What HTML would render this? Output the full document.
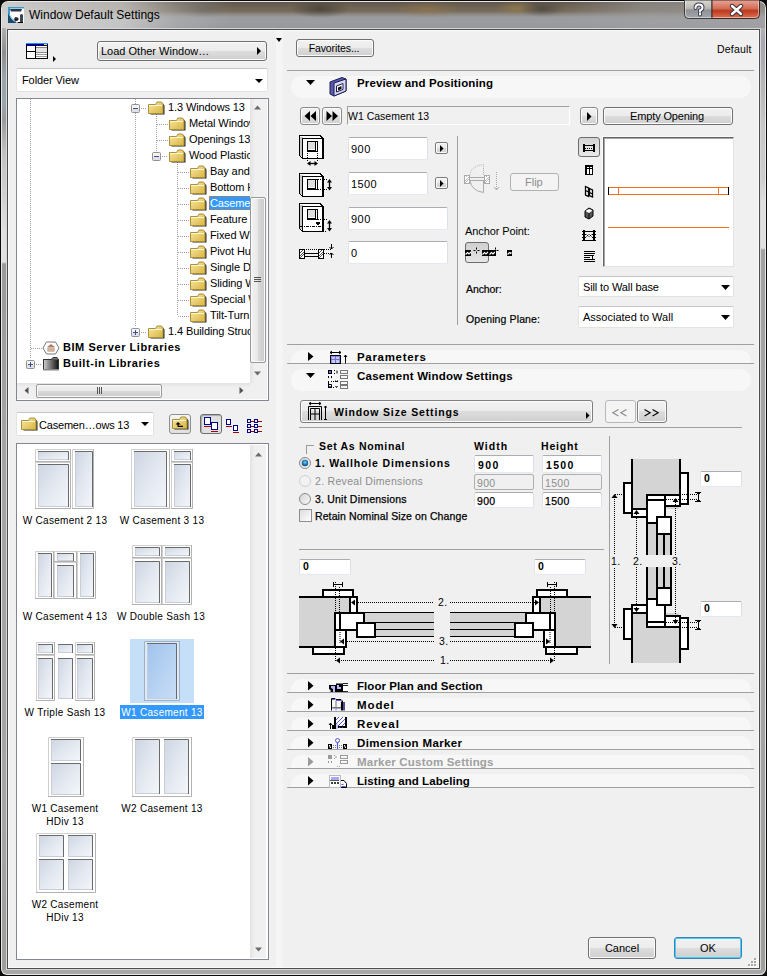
<!DOCTYPE html>
<html><head><meta charset="utf-8">
<style>
*{box-sizing:border-box}
html,body{margin:0;padding:0}
body{width:767px;height:976px;position:relative;overflow:hidden;background:#0c0c0c;font-family:"Liberation Sans",sans-serif;font-size:11px;color:#000}
.a{position:absolute}
.t{position:absolute;white-space:nowrap;line-height:13px}
.b{font-weight:bold}
/* win7 push button */
.btn{position:absolute;border:1px solid #707070;border-radius:3px;background:linear-gradient(#f2f2f2 0,#ebebeb 50%,#dddddd 50%,#cfcfcf 100%);box-shadow:inset 0 0 0 1px #fcfcfc;text-align:center;white-space:nowrap}
.edit{position:absolute;background:#fff;border:1px solid #abadb3;border-color:#abadb3 #dbdfe6 #e3e9ef #e2e3ea;border-radius:2px}
.combo{position:absolute;background:#fff;border:1px solid #dadada;border-color:#c5c5c5 #e3e3e3 #e3e3e3 #e3e3e3;border-radius:2px}
.tri-d{position:absolute;width:0;height:0;border-left:4px solid transparent;border-right:4px solid transparent;border-top:4px solid #000}
.tri-r{position:absolute;width:0;height:0;border-top:4px solid transparent;border-bottom:4px solid transparent;border-left:4px solid #000}
.hl{position:absolute;height:1px;background:#a0a0a0}
.vl{position:absolute;width:1px;background:#a0a0a0}
.dh{position:absolute;height:1px;background:repeating-linear-gradient(90deg,#a0a0a0 0 1px,transparent 1px 2px)}
.dv{position:absolute;width:1px;background:repeating-linear-gradient(180deg,#a0a0a0 0 1px,transparent 1px 2px)}
.sel{background:#3399ff;color:#fff;padding:1px 1px 0 1px;margin:-1px 0 0 -1px;height:14px;outline:1px dotted #d9741f;outline-offset:-1px}
.sb{position:absolute;background:linear-gradient(90deg,#e3e3e3,#f0f0f0 30%,#f0f0f0)}
.thumbv{position:absolute;border:1px solid #9a9a9a;border-radius:2px;background:linear-gradient(90deg,#f3f3f3,#e8e8e8 50%,#d9d9d9 50%,#cacaca);box-shadow:inset 0 0 0 1px #f8f8f8}
.thumbh{position:absolute;border:1px solid #9a9a9a;border-radius:2px;background:linear-gradient(#f3f3f3,#e8e8e8 50%,#d9d9d9 50%,#cacaca);box-shadow:inset 0 0 0 1px #f8f8f8}
.hdr{position:absolute;height:22px;border-radius:11px;background:#f7f7f7}
svg.a{overflow:visible}
</style></head><body>
<svg width="0" height="0" style="position:absolute">
<defs>
<g id="minus"><rect x="0.5" y="0.5" width="8" height="8" rx="1" fill="#f4f4f4" stroke="#919191"/><rect x="1" y="5" width="7" height="3" fill="#e0e0e0"/><rect x="2" y="4" width="5" height="1" fill="#3b4d9b"/></g>
<g id="plus"><rect x="0.5" y="0.5" width="8" height="8" rx="1" fill="#f4f4f4" stroke="#919191"/><rect x="1" y="5" width="7" height="3" fill="#e0e0e0"/><rect x="2" y="4" width="5" height="1" fill="#3b4d9b"/><rect x="4" y="2" width="1" height="5" fill="#3b4d9b"/></g>
<linearGradient id="fg" x1="0" y1="0" x2="1" y2="1"><stop offset="0" stop-color="#fbeaa6"/><stop offset="1" stop-color="#d8b33e"/></linearGradient>
<g id="folder"><path d="M1.5 3.5 h6 l1.5 -2 h5 l1.5 2 v9 h-14z" fill="#2b2b2b" transform="translate(1,1)"/><path d="M0.5 3.5 h7 l1.5 -2.5 h4.5 l1.5 2.5 v9 h-14.5z" fill="url(#fg)" stroke="#a88f3a"/><rect x="1" y="4" width="13" height="1" fill="#fff6cf"/></g>
<linearGradient id="lg" x1="0" y1="0" x2="1" y2="0"><stop offset="0" stop-color="#d0d0d0"/><stop offset="1" stop-color="#111"/></linearGradient>
<g id="lib"><rect x="0.5" y="2.5" width="15" height="10" fill="url(#lg)" stroke="#333"/><path d="M8 2.5 l2 -2 h4 l1.5 2" fill="#777" stroke="#333"/><rect x="0" y="12" width="16" height="1.5" fill="#888"/></g>
<g id="bim"><path d="M3.5 1 h9 l3.5 6 l-3.5 6 h-9 l-3.5 -6z" fill="#fff" stroke="#777"/><path d="M4 6 l4 -3 l4 3z M4.5 6.5 h7 v4 h-7z" fill="#b08060"/><path d="M6 7 v3 M8 7 v3 M10 7 v3" stroke="#fff" stroke-width="0.8"/></g>
</defs></svg>

<!-- window frame -->
<div class="a" style="left:0;top:0;width:767px;height:976px;background:#0a0a0a;border-radius:8px 8px 7px 7px"></div>
<div class="a" style="left:1px;top:1px;width:765px;height:974px;background:#e8e8e8;border-radius:7px 7px 6px 6px"></div>
<div class="a" style="left:2px;top:2px;width:763px;height:972px;background:#a8a8a8;border-radius:6px 6px 5px 5px"></div>
<!-- title blur -->
<div class="a" id="title" style="left:2px;top:2px;width:763px;height:26px;border-radius:6px 6px 0 0;background:linear-gradient(90deg,rgba(222,222,222,.85) 0,rgba(212,212,212,.72) 120px,rgba(190,190,190,.35) 175px,rgba(160,160,160,0) 230px),linear-gradient(90deg,rgba(165,165,165,0) 560px,rgba(160,160,162,.55) 640px,rgba(165,165,168,.6) 763px),radial-gradient(30px 9px at 318px 7px,rgba(50,42,36,.55),rgba(50,42,36,0)),radial-gradient(34px 9px at 425px 7px,rgba(160,125,70,.45),rgba(160,125,70,0)),radial-gradient(22px 8px at 540px 7px,rgba(45,45,45,.45),rgba(45,45,45,0)),radial-gradient(22px 8px at 515px 6px,rgba(170,140,70,.45),rgba(170,140,70,0)),radial-gradient(26px 9px at 200px 7px,rgba(70,70,70,.35),rgba(70,70,70,0)),linear-gradient(#5f564c 0,#6c6152 4px,#766a59 9px,#8a8681 12px,#9a9b9e 15px,#9c9da1 20px,#95979b 26px)"></div>
<div class="a" style="left:2px;top:28px;width:4px;height:942px;background:linear-gradient(#b0b0b0 0,#8e8e8e 25px,#9ba7ae 50px,#9aa6ad 77px,#9a9a9a 92px,#c2c2c2 125px,#d2d2d2 170px,#e0e0e0 205px,#e2e2e2 234px,#9a9a9a 236px,#a4a4a4 400px,#a6a6a6 800px,#a09e9a 942px)"></div>
<div class="a" style="left:761px;top:28px;width:4px;height:942px;background:linear-gradient(#b2b2b2 0,#a6a6ae 14px,#b4b4b4 50px,#c8c8c8 100px,#cccccc 150px,#e0e0e0 175px,#e0e0e0 220px,#a2a2a2 222px,#a6a6a6 600px,#a09e9a 942px)"></div>
<div class="a" style="left:6px;top:28px;width:755px;height:942px;background:#d6d7da"></div>
<div class="a" style="left:7px;top:29px;width:753px;height:940px;background:#4c4c4c"></div>
<div class="a" style="left:8px;top:30px;width:751px;height:938px;background:#fafafa"></div>
<div class="a" style="left:9px;top:31px;width:749px;height:936px;background:#f0f0f0"></div>
<div class="t" style="left:29px;top:8px;font-size:12px;line-height:15px;color:#000">Window Default Settings</div>
<!-- title icon -->
<svg class="a" style="left:8px;top:7px" width="16" height="16">
<rect x="0" y="0" width="16" height="16" fill="#fff"/>
<path d="M0 0 H16 V1.5 H2 V16 H0z" fill="#3d9ad0"/>
<path d="M0 6 Q2 12 9 16 H0z" fill="#1c4a6a"/><path d="M1 7 Q3 12 8 15" stroke="#5ab8e8" fill="none"/>
<path d="M2 2 H14 L13 4.5 H3z" fill="#2a3448"/>
<path d="M7.5 10 Q10 10 11 12 Q9 15 7 14 Q5 12 7.5 10z" fill="#2c2630"/>
<path d="M12 16 V8 Q13.5 6 15 8 V16z" fill="#3a4656"/><path d="M15 2 V16 H9 L10 15 H15z" fill="#000"/>
</svg>
<!-- help & close -->
<svg class="a" style="left:684px;top:0" width="77" height="20">
<defs><linearGradient id="hb" x1="0" y1="0" x2="0" y2="1"><stop offset="0" stop-color="#dad8d2"/><stop offset="0.45" stop-color="#b9b8b4"/><stop offset="0.55" stop-color="#8f9195"/><stop offset="1" stop-color="#a4a7ad"/></linearGradient>
<linearGradient id="cb" x1="0" y1="0" x2="0" y2="1"><stop offset="0" stop-color="#e9a596"/><stop offset="0.45" stop-color="#d2705a"/><stop offset="0.58" stop-color="#c0381c"/><stop offset="1" stop-color="#d9765a"/></linearGradient></defs>
<path d="M0.5 0 V14.5 Q0.5 18.5 4.5 18.5 H28 V0z" fill="url(#hb)" stroke="#3c3c3c"/>
<path d="M28 0 V18.5 H71.5 Q75.5 18.5 75.5 14.5 V0z" fill="url(#cb)" stroke="#3c2a26"/>
<path d="M1.5 1 V14 Q1.5 17.5 5 17.5 H27.5 M28.5 17.5 H71 Q74.5 17.5 74.5 14 V1" fill="none" stroke="rgba(255,255,255,.45)"/>
<path d="M11.5 8 Q11.5 4.5 15 4.5 Q18.5 4.5 18.5 7.5 Q18.5 9.5 16 10.5 V11.5 M16 13.5 V14.5" fill="none" stroke="#3a3f52" stroke-width="4" stroke-linecap="round"/>
<path d="M11.5 8 Q11.5 4.5 15 4.5 Q18.5 4.5 18.5 7.5 Q18.5 9.5 16 10.5 V11.5 M16 13.5 V14.5" fill="none" stroke="#fff" stroke-width="2" stroke-linecap="round"/>
<path d="M48 6 L57 14 M57 6 L48 14" stroke="#3a2f38" stroke-width="4.4" stroke-linecap="round"/>
<path d="M48 6 L57 14 M57 6 L48 14" stroke="#fff" stroke-width="2.4" stroke-linecap="round"/>
</svg>
<!-- splitter -->
<div class="a" style="left:276px;top:31px;width:7px;height:936px;background:#f5f5f5"></div>
<div class="tri-d" style="left:276px;top:38px;border-width:4px 3px 0 3px"></div>


<!-- ============ LEFT PANEL ============ -->
<svg class="a" style="left:26px;top:43px" width="32" height="20" shape-rendering="crispEdges">
<rect x="0" y="0" width="22" height="16" fill="#000"/><rect x="1" y="3" width="20" height="12" fill="#fff"/>
<rect x="0" y="0" width="22" height="1" fill="#2a8cff"/><rect x="0" y="1" width="22" height="2" fill="#000080"/><rect x="18" y="1" width="3" height="1" fill="#ffe800"/>
<rect x="9" y="3" width="1" height="12" fill="#000"/><rect x="1" y="8" width="8" height="1" fill="#000"/>
<rect x="10" y="4" width="11" height="1" fill="#8a8a8a"/><rect x="10" y="5" width="11" height="4" fill="#e4e4e4"/><rect x="10" y="9" width="11" height="1" fill="#8a8a8a"/><rect x="10" y="11" width="11" height="1" fill="#9a9a9a"/><rect x="10" y="13" width="11" height="1" fill="#9a9a9a"/>
<path d="M27 13 l3 3 l-3 3z" fill="#000" shape-rendering="auto"/>
</svg>
<div class="btn" style="left:97px;top:41px;width:170px;height:20px;text-align:left;padding-left:3px;line-height:18px;font-size:11px">Load Other Window…</div>
<div class="tri-r" style="left:257px;top:47px"></div>
<div class="combo" style="left:16px;top:68px;width:252px;height:24px"></div>
<div class="t" style="left:22px;top:74px;font-size:11px;letter-spacing:-0.1px">Folder View</div>
<div class="tri-d" style="left:255px;top:79px"></div>
<!-- tree box -->
<div class="a" style="left:16px;top:98px;width:253px;height:303px;border:1px solid #828790;background:#fff;overflow:hidden" id="treebox"></div>

<div class="a" style="left:17px;top:99px;width:233px;height:284px;overflow:hidden">
<div class="dv" style="left:13px;top:0px;height:260px"></div>
<div class="dv" style="left:118px;top:0px;height:228px"></div>
<div class="dv" style="left:139px;top:15px;height:37px"></div>
<div class="dv" style="left:160px;top:63px;height:154px"></div>
<svg class="a" style="left:114px;top:5px" width="9" height="9"><use href="#minus"/></svg>
<div class="dh" style="left:124px;top:9px;width:6px"></div>
<svg class="a" style="left:131px;top:2px" width="17" height="14"><use href="#folder"/></svg>
<div class="t" style="left:151px;top:2px;font-size:11px;letter-spacing:-0.1px">1.3 Windows 13</div>
<div class="dh" style="left:140px;top:25px;width:11px"></div>
<svg class="a" style="left:152px;top:18px" width="17" height="14"><use href="#folder"/></svg>
<div class="t" style="left:172px;top:18px;font-size:11px;letter-spacing:-0.1px">Metal Windows 13</div>
<div class="dh" style="left:140px;top:41px;width:11px"></div>
<svg class="a" style="left:152px;top:34px" width="17" height="14"><use href="#folder"/></svg>
<div class="t" style="left:172px;top:34px;font-size:11px;letter-spacing:-0.1px">Openings 13</div>
<svg class="a" style="left:135px;top:53px" width="9" height="9"><use href="#minus"/></svg>
<div class="dh" style="left:145px;top:57px;width:6px"></div>
<svg class="a" style="left:152px;top:50px" width="17" height="14"><use href="#folder"/></svg>
<div class="t" style="left:172px;top:50px;font-size:11px;letter-spacing:-0.1px">Wood Plastic Windows 13</div>
<div class="dh" style="left:161px;top:73px;width:11px"></div>
<svg class="a" style="left:173px;top:66px" width="17" height="14"><use href="#folder"/></svg>
<div class="t" style="left:193px;top:66px;font-size:11px;letter-spacing:-0.1px">Bay and Bow Windows 13</div>
<div class="dh" style="left:161px;top:89px;width:11px"></div>
<svg class="a" style="left:173px;top:82px" width="17" height="14"><use href="#folder"/></svg>
<div class="t" style="left:193px;top:82px;font-size:11px;letter-spacing:-0.1px">Bottom Hung Windows 13</div>
<div class="dh" style="left:161px;top:105px;width:11px"></div>
<svg class="a" style="left:173px;top:98px" width="17" height="14"><use href="#folder"/></svg>
<div class="t sel" style="left:193px;top:98px;font-size:11px;letter-spacing:-0.1px">Casement Windows 13</div>
<div class="dh" style="left:161px;top:121px;width:11px"></div>
<svg class="a" style="left:173px;top:114px" width="17" height="14"><use href="#folder"/></svg>
<div class="t" style="left:193px;top:114px;font-size:11px;letter-spacing:-0.1px">Feature Windows 13</div>
<div class="dh" style="left:161px;top:137px;width:11px"></div>
<svg class="a" style="left:173px;top:130px" width="17" height="14"><use href="#folder"/></svg>
<div class="t" style="left:193px;top:130px;font-size:11px;letter-spacing:-0.1px">Fixed Windows 13</div>
<div class="dh" style="left:161px;top:153px;width:11px"></div>
<svg class="a" style="left:173px;top:146px" width="17" height="14"><use href="#folder"/></svg>
<div class="t" style="left:193px;top:146px;font-size:11px;letter-spacing:-0.1px">Pivot Hung Windows 13</div>
<div class="dh" style="left:161px;top:169px;width:11px"></div>
<svg class="a" style="left:173px;top:162px" width="17" height="14"><use href="#folder"/></svg>
<div class="t" style="left:193px;top:162px;font-size:11px;letter-spacing:-0.1px">Single Double Hung 13</div>
<div class="dh" style="left:161px;top:185px;width:11px"></div>
<svg class="a" style="left:173px;top:178px" width="17" height="14"><use href="#folder"/></svg>
<div class="t" style="left:193px;top:178px;font-size:11px;letter-spacing:-0.1px">Sliding Windows 13</div>
<div class="dh" style="left:161px;top:201px;width:11px"></div>
<svg class="a" style="left:173px;top:194px" width="17" height="14"><use href="#folder"/></svg>
<div class="t" style="left:193px;top:194px;font-size:11px;letter-spacing:-0.1px">Special Windows 13</div>
<div class="dh" style="left:161px;top:217px;width:11px"></div>
<svg class="a" style="left:173px;top:210px" width="17" height="14"><use href="#folder"/></svg>
<div class="t" style="left:193px;top:210px;font-size:11px;letter-spacing:-0.1px">Tilt-Turn Windows 13</div>
<svg class="a" style="left:114px;top:229px" width="9" height="9"><use href="#plus"/></svg>
<div class="dh" style="left:124px;top:233px;width:6px"></div>
<svg class="a" style="left:131px;top:226px" width="17" height="14"><use href="#folder"/></svg>
<div class="t" style="left:151px;top:226px;font-size:11px;letter-spacing:-0.1px">1.4 Building Structures 13</div>
<div class="dh" style="left:14px;top:249px;width:11px"></div>
<svg class="a" style="left:26px;top:242px" width="17" height="14"><use href="#bim"/></svg>
<div class="t b" style="left:46px;top:242px;font-size:11px;letter-spacing:0.55px">BIM Server Libraries</div>
<svg class="a" style="left:9px;top:261px" width="9" height="9"><use href="#plus"/></svg>
<div class="dh" style="left:19px;top:265px;width:6px"></div>
<svg class="a" style="left:26px;top:258px" width="17" height="14"><use href="#lib"/></svg>
<div class="t b" style="left:46px;top:258px;font-size:11px;letter-spacing:0.55px">Built-in Libraries</div>
</div>
<div class="sb" style="left:250px;top:99px;width:17px;height:284px"></div>
<div class="thumbv" style="left:250px;top:197px;width:16px;height:166px"></div>
<div class="a" style="left:254px;top:277px;width:7px;height:1px;background:#555;box-shadow:0 2px 0 #555,0 4px 0 #555"></div>
<svg class="a" style="left:254px;top:105px" width="8" height="5"><path d="M0 4.5 L3.5 0.5 L7 4.5z" fill="#6b6b6b"/></svg>
<svg class="a" style="left:254px;top:371px" width="8" height="5"><path d="M0 0.5 L3.5 4.5 L7 0.5z" fill="#6b6b6b"/></svg>
<div class="sb" style="left:17px;top:383px;width:250px;height:16px;background:linear-gradient(#e3e3e3,#f0f0f0 30%)"></div>
<div class="thumbh" style="left:36px;top:384px;width:126px;height:14px"></div>
<div class="a" style="left:97px;top:387px;width:1px;height:7px;background:#555;box-shadow:2px 0 0 #555,4px 0 0 #555"></div>
<svg class="a" style="left:24px;top:387px" width="5" height="8"><path d="M4.5 0 L0.5 3.5 L4.5 7z" fill="#555"/></svg>
<svg class="a" style="left:239px;top:387px" width="5" height="8"><path d="M0.5 0 L4.5 3.5 L0.5 7z" fill="#555"/></svg>
<div class="a" style="left:250px;top:383px;width:17px;height:16px;background:#f0f0f0"></div>
<div class="combo" style="left:16px;top:412px;width:138px;height:24px"></div>
<svg class="a" style="left:21px;top:417px" width="17" height="14"><use href="#folder"/></svg>
<div class="t" style="left:39px;top:419px;letter-spacing:-0.2px">Casemen…ows 13</div>
<svg class="a" style="left:141px;top:422px" width="8" height="5"><path d="M0 0 L4 4 L8 0z" fill="#000"/></svg>
<div class="a" style="left:169px;top:414px;width:22px;height:20px;border:1px solid #8e8f8f;border-radius:3px;background:linear-gradient(#f6f6f6,#e0e0e0)"></div>
<svg class="a" style="left:172px;top:416px" width="17" height="14"><use href="#folder"/><path d="M6 6 l-2.5 2.5 h2 v2.5 h5.5 v-1.2 h-4.3 v-1.3 h2z" fill="#000"/></svg>
<div class="a" style="left:200px;top:414px;width:22px;height:20px;border:1px solid #6e6e6e;border-radius:3px;background:#e1e1e1;box-shadow:inset 1px 1px 1px #aaa"></div>
<svg class="a" style="left:203px;top:417px" width="16" height="16">
<rect x="1.5" y="0.5" width="6" height="7" fill="#fff" stroke="#00008a"/><rect x="1" y="9" width="7" height="1" fill="#a00000"/>
<rect x="8.5" y="5.5" width="6" height="7" fill="#fff" stroke="#00008a"/><rect x="8" y="14" width="7" height="1" fill="#a00000"/></svg>
<svg class="a" style="left:225px;top:419px" width="16" height="14">
<rect x="1.5" y="0.5" width="4" height="5" fill="#fff" stroke="#00008a"/><rect x="1" y="7" width="6" height="1" fill="#a00000"/>
<rect x="8.5" y="6.5" width="4" height="5" fill="#fff" stroke="#00008a"/><rect x="8" y="13" width="6" height="1" fill="#a00000"/></svg>
<svg class="a" style="left:247px;top:419px" width="16" height="14">
<g fill="none" stroke="#00008a"><rect x="0.5" y="0.5" width="3" height="3"/><rect x="0.5" y="5.5" width="3" height="3"/><rect x="0.5" y="10.5" width="3" height="3"/><rect x="7.5" y="0.5" width="3" height="3"/><rect x="7.5" y="5.5" width="3" height="3"/><rect x="7.5" y="10.5" width="3" height="3"/></g>
<g fill="#a00000"><rect x="4" y="2" width="3" height="1"/><rect x="4" y="7" width="3" height="1"/><rect x="4" y="12" width="3" height="1"/><rect x="11" y="2" width="4" height="1"/><rect x="11" y="7" width="4" height="1"/><rect x="11" y="12" width="4" height="1"/></g></svg>
<!-- grid box -->
<div class="a" style="left:16px;top:443px;width:253px;height:517px;border:1px solid #828790;background:#fff"></div>
<div class="sb" style="left:250px;top:445px;width:16px;height:513px"></div>
<svg class="a" style="left:255px;top:452px" width="8" height="5"><path d="M0 4.5 L3.5 0.5 L7 4.5z" fill="#6b6b6b"/></svg>
<svg class="a" style="left:255px;top:947px" width="8" height="5"><path d="M0 0.5 L3.5 4.5 L7 0.5z" fill="#6b6b6b"/></svg>
<svg width="0" height="0" style="position:absolute"><defs>
<linearGradient id="gl" x1="0" y1="0" x2="1" y2="1"><stop offset="0" stop-color="#cdd5e2"/><stop offset="0.5" stop-color="#e3e8f0"/><stop offset="1" stop-color="#f4f6fa"/></linearGradient>
<linearGradient id="gls" x1="0" y1="0" x2="1" y2="1"><stop offset="0" stop-color="#9fc2ec"/><stop offset="0.5" stop-color="#b5d1f2"/><stop offset="1" stop-color="#c9ddf5"/></linearGradient>
</defs></svg>

<svg class="a" style="left:35px;top:449px" width="60" height="61"><rect x="0" y="0" width="36" height="13" fill="#fff"/><path d="M0.5 13 V0.5 H36" stroke="#cfcfcf" fill="none"/><path d="M0 12.5 H35.5 V0" stroke="#b2b2b2" fill="none"/><rect x="3" y="2" width="31" height="9" fill="url(#gl)"/><path d="M3 2.5 H33.5 V11" stroke="#6a6a6a" fill="none"/><path d="M3.5 3 V10.5 H33" stroke="#c9ced6" fill="none"/><rect x="0" y="13" width="36" height="47" fill="#fff"/><path d="M0.5 60 V13.5 H36" stroke="#cfcfcf" fill="none"/><path d="M0 59.5 H35.5 V13" stroke="#b2b2b2" fill="none"/><rect x="3" y="15" width="31" height="43" fill="url(#gl)"/><path d="M3 15.5 H33.5 V58" stroke="#6a6a6a" fill="none"/><path d="M3.5 16 V57.5 H33" stroke="#c9ced6" fill="none"/><rect x="37" y="0" width="22" height="60" fill="#fff"/><path d="M37.5 60 V0.5 H59" stroke="#cfcfcf" fill="none"/><path d="M37 59.5 H58.5 V0" stroke="#b2b2b2" fill="none"/><rect x="40" y="2" width="18" height="56" fill="url(#gl)"/><path d="M40 2.5 H57.5 V58" stroke="#6a6a6a" fill="none"/><path d="M40.5 3 V57.5 H57" stroke="#c9ced6" fill="none"/></svg>
<svg class="a" style="left:131px;top:449px" width="63" height="61"><rect x="0" y="0" width="39" height="60" fill="#fff"/><path d="M0.5 60 V0.5 H39" stroke="#cfcfcf" fill="none"/><path d="M0 59.5 H38.5 V0" stroke="#b2b2b2" fill="none"/><rect x="3" y="2" width="33" height="56" fill="url(#gl)"/><path d="M3 2.5 H35.5 V58" stroke="#6a6a6a" fill="none"/><path d="M3.5 3 V57.5 H35" stroke="#c9ced6" fill="none"/><rect x="40" y="0" width="22" height="13" fill="#fff"/><path d="M40.5 13 V0.5 H62" stroke="#cfcfcf" fill="none"/><path d="M40 12.5 H61.5 V0" stroke="#b2b2b2" fill="none"/><rect x="43" y="2" width="17" height="9" fill="url(#gl)"/><path d="M43 2.5 H59.5 V11" stroke="#6a6a6a" fill="none"/><path d="M43.5 3 V10.5 H59" stroke="#c9ced6" fill="none"/><rect x="40" y="13" width="22" height="47" fill="#fff"/><path d="M40.5 60 V13.5 H62" stroke="#cfcfcf" fill="none"/><path d="M40 59.5 H61.5 V13" stroke="#b2b2b2" fill="none"/><rect x="43" y="15" width="17" height="43" fill="url(#gl)"/><path d="M43 15.5 H59.5 V58" stroke="#6a6a6a" fill="none"/><path d="M43.5 16 V57.5 H59" stroke="#c9ced6" fill="none"/></svg>
<svg class="a" style="left:35px;top:551px" width="62" height="49"><rect x="0" y="0" width="19" height="48" fill="#fff"/><path d="M0.5 48 V0.5 H19" stroke="#cfcfcf" fill="none"/><path d="M0 47.5 H18.5 V0" stroke="#b2b2b2" fill="none"/><rect x="3" y="2" width="14" height="44" fill="url(#gl)"/><path d="M3 2.5 H16.5 V46" stroke="#6a6a6a" fill="none"/><path d="M3.5 3 V45.5 H16" stroke="#c9ced6" fill="none"/><rect x="19" y="0" width="23" height="11" fill="#fff"/><path d="M19.5 11 V0.5 H42" stroke="#cfcfcf" fill="none"/><path d="M19 10.5 H41.5 V0" stroke="#b2b2b2" fill="none"/><rect x="22" y="2" width="17" height="8" fill="url(#gl)"/><path d="M22 2.5 H38.5 V10" stroke="#6a6a6a" fill="none"/><path d="M22.5 3 V9.5 H38" stroke="#c9ced6" fill="none"/><rect x="19" y="11" width="23" height="37" fill="#fff"/><path d="M19.5 48 V11.5 H42" stroke="#cfcfcf" fill="none"/><path d="M19 47.5 H41.5 V11" stroke="#b2b2b2" fill="none"/><rect x="22" y="14" width="17" height="32" fill="url(#gl)"/><path d="M22 14.5 H38.5 V46" stroke="#6a6a6a" fill="none"/><path d="M22.5 15 V45.5 H38" stroke="#c9ced6" fill="none"/><rect x="42" y="0" width="19" height="48" fill="#fff"/><path d="M42.5 48 V0.5 H61" stroke="#cfcfcf" fill="none"/><path d="M42 47.5 H60.5 V0" stroke="#b2b2b2" fill="none"/><rect x="45" y="2" width="14" height="44" fill="url(#gl)"/><path d="M45 2.5 H58.5 V46" stroke="#6a6a6a" fill="none"/><path d="M45.5 3 V45.5 H58" stroke="#c9ced6" fill="none"/></svg>
<svg class="a" style="left:132px;top:545px" width="61" height="61"><rect x="0" y="0" width="30" height="13" fill="#fff"/><path d="M0.5 13 V0.5 H30" stroke="#cfcfcf" fill="none"/><path d="M0 12.5 H29.5 V0" stroke="#b2b2b2" fill="none"/><rect x="3" y="2" width="25" height="9" fill="url(#gl)"/><path d="M3 2.5 H27.5 V11" stroke="#6a6a6a" fill="none"/><path d="M3.5 3 V10.5 H27" stroke="#c9ced6" fill="none"/><rect x="30" y="0" width="30" height="13" fill="#fff"/><path d="M30.5 13 V0.5 H60" stroke="#cfcfcf" fill="none"/><path d="M30 12.5 H59.5 V0" stroke="#b2b2b2" fill="none"/><rect x="33" y="2" width="25" height="9" fill="url(#gl)"/><path d="M33 2.5 H57.5 V11" stroke="#6a6a6a" fill="none"/><path d="M33.5 3 V10.5 H57" stroke="#c9ced6" fill="none"/><rect x="0" y="13" width="30" height="47" fill="#fff"/><path d="M0.5 60 V13.5 H30" stroke="#cfcfcf" fill="none"/><path d="M0 59.5 H29.5 V13" stroke="#b2b2b2" fill="none"/><rect x="3" y="16" width="25" height="42" fill="url(#gl)"/><path d="M3 16.5 H27.5 V58" stroke="#6a6a6a" fill="none"/><path d="M3.5 17 V57.5 H27" stroke="#c9ced6" fill="none"/><rect x="30" y="13" width="30" height="47" fill="#fff"/><path d="M30.5 60 V13.5 H60" stroke="#cfcfcf" fill="none"/><path d="M30 59.5 H59.5 V13" stroke="#b2b2b2" fill="none"/><rect x="33" y="16" width="25" height="42" fill="url(#gl)"/><path d="M33 16.5 H57.5 V58" stroke="#6a6a6a" fill="none"/><path d="M33.5 17 V57.5 H57" stroke="#c9ced6" fill="none"/></svg>
<svg class="a" style="left:36px;top:642px" width="60" height="60"><rect x="0" y="0" width="19" height="13" fill="#fff"/><path d="M0.5 13 V0.5 H19" stroke="#cfcfcf" fill="none"/><path d="M0 12.5 H18.5 V0" stroke="#b2b2b2" fill="none"/><rect x="2" y="2" width="15" height="9" fill="url(#gl)"/><path d="M2 2.5 H16.5 V11" stroke="#6a6a6a" fill="none"/><path d="M2.5 3 V10.5 H16" stroke="#c9ced6" fill="none"/><rect x="19" y="0" width="20" height="59" fill="#fff"/><rect x="22" y="2" width="15" height="9" fill="url(#gl)"/><path d="M22 2.5 H36.5 V11" stroke="#6a6a6a" fill="none"/><path d="M22.5 3 V10.5 H36" stroke="#c9ced6" fill="none"/><rect x="39" y="0" width="20" height="13" fill="#fff"/><path d="M39.5 13 V0.5 H59" stroke="#cfcfcf" fill="none"/><path d="M39 12.5 H58.5 V0" stroke="#b2b2b2" fill="none"/><rect x="41" y="2" width="16" height="9" fill="url(#gl)"/><path d="M41 2.5 H56.5 V11" stroke="#6a6a6a" fill="none"/><path d="M41.5 3 V10.5 H56" stroke="#c9ced6" fill="none"/><rect x="0" y="13" width="19" height="46" fill="#fff"/><path d="M0.5 59 V13.5 H19" stroke="#cfcfcf" fill="none"/><path d="M0 58.5 H18.5 V13" stroke="#b2b2b2" fill="none"/><rect x="2" y="16" width="15" height="41" fill="url(#gl)"/><path d="M2 16.5 H16.5 V57" stroke="#6a6a6a" fill="none"/><path d="M2.5 17 V56.5 H16" stroke="#c9ced6" fill="none"/><rect x="22" y="16" width="15" height="41" fill="url(#gl)"/><path d="M22 16.5 H36.5 V57" stroke="#6a6a6a" fill="none"/><path d="M22.5 17 V56.5 H36" stroke="#c9ced6" fill="none"/><rect x="39" y="13" width="20" height="46" fill="#fff"/><path d="M39.5 59 V13.5 H59" stroke="#cfcfcf" fill="none"/><path d="M39 58.5 H58.5 V13" stroke="#b2b2b2" fill="none"/><rect x="41" y="16" width="16" height="41" fill="url(#gl)"/><path d="M41 16.5 H56.5 V57" stroke="#6a6a6a" fill="none"/><path d="M41.5 17 V56.5 H56" stroke="#c9ced6" fill="none"/></svg>
<div class="a" style="left:130px;top:639px;width:64px;height:64px;background:#c6dff8"></div>
<svg class="a" style="left:144px;top:641px" width="37" height="61"><rect x="0" y="0" width="36" height="60" fill="#dbe9f9"/><path d="M0.5 60 V0.5 H36 M0 59.5 H35.5 V0" stroke="#9fb0c4" fill="none"/><rect x="3" y="2" width="30" height="56" fill="url(#gls)"/><path d="M3 2.5 H32.5 V58" stroke="#6a6a6a" fill="none"/><path d="M3.5 3 V57.5 H32" stroke="#c9ced6" fill="none"/></svg>
<svg class="a" style="left:48px;top:737px" width="37" height="61"><rect x="0" y="0" width="36" height="60" fill="#fff"/><path d="M0.5 60 V0.5 H36" stroke="#cfcfcf" fill="none"/><path d="M0 59.5 H35.5 V0" stroke="#b2b2b2" fill="none"/><rect x="3" y="2" width="30" height="22" fill="url(#gl)"/><path d="M3 2.5 H32.5 V24" stroke="#6a6a6a" fill="none"/><path d="M3.5 3 V23.5 H32" stroke="#c9ced6" fill="none"/><rect x="3" y="26" width="30" height="32" fill="url(#gl)"/><path d="M3 26.5 H32.5 V58" stroke="#6a6a6a" fill="none"/><path d="M3.5 27 V57.5 H32" stroke="#c9ced6" fill="none"/></svg>
<svg class="a" style="left:132px;top:737px" width="61" height="61"><rect x="0" y="0" width="60" height="60" fill="#fff"/><path d="M0.5 60 V0.5 H60" stroke="#cfcfcf" fill="none"/><path d="M0 59.5 H59.5 V0" stroke="#b2b2b2" fill="none"/><rect x="3" y="2" width="25" height="55" fill="url(#gl)"/><path d="M3 2.5 H27.5 V57" stroke="#6a6a6a" fill="none"/><path d="M3.5 3 V56.5 H27" stroke="#c9ced6" fill="none"/><rect x="32" y="2" width="25" height="55" fill="url(#gl)"/><path d="M32 2.5 H56.5 V57" stroke="#6a6a6a" fill="none"/><path d="M32.5 3 V56.5 H56" stroke="#c9ced6" fill="none"/></svg>
<svg class="a" style="left:36px;top:833px" width="61" height="61"><rect x="0" y="0" width="60" height="60" fill="#fff"/><path d="M0.5 60 V0.5 H60" stroke="#cfcfcf" fill="none"/><path d="M0 59.5 H59.5 V0" stroke="#b2b2b2" fill="none"/><rect x="3" y="2" width="25" height="22" fill="url(#gl)"/><path d="M3 2.5 H27.5 V24" stroke="#6a6a6a" fill="none"/><path d="M3.5 3 V23.5 H27" stroke="#c9ced6" fill="none"/><rect x="32" y="2" width="25" height="22" fill="url(#gl)"/><path d="M32 2.5 H56.5 V24" stroke="#6a6a6a" fill="none"/><path d="M32.5 3 V23.5 H56" stroke="#c9ced6" fill="none"/><rect x="3" y="26" width="25" height="31" fill="url(#gl)"/><path d="M3 26.5 H27.5 V57" stroke="#6a6a6a" fill="none"/><path d="M3.5 27 V56.5 H27" stroke="#c9ced6" fill="none"/><rect x="32" y="26" width="25" height="31" fill="url(#gl)"/><path d="M32 26.5 H56.5 V57" stroke="#6a6a6a" fill="none"/><path d="M32.5 27 V56.5 H56" stroke="#c9ced6" fill="none"/></svg>
<div class="t" style="left:5px;top:514px;width:120px;text-align:center;letter-spacing:0.3px;font-size:10px">W Casement 2 13</div>
<div class="t" style="left:102px;top:514px;width:120px;text-align:center;letter-spacing:0.3px;font-size:10px">W Casement 3 13</div>
<div class="t" style="left:5px;top:610px;width:120px;text-align:center;letter-spacing:0.3px;font-size:10px">W Casement 4 13</div>
<div class="t" style="left:101px;top:610px;width:120px;text-align:center;letter-spacing:0.3px;font-size:10px">W Double Sash 13</div>
<div class="t" style="left:5px;top:706px;width:120px;text-align:center;letter-spacing:0.3px;font-size:10px">W Triple Sash 13</div>
<div class="t" style="left:120px;top:705px;width:84px;text-align:center;background:#3399ff;color:#fff;height:14px;line-height:15px;letter-spacing:0.3px;font-size:10px">W1 Casement 13</div>
<div class="t" style="left:5px;top:802px;width:120px;text-align:center;letter-spacing:0.3px;font-size:10px">W1 Casement</div>
<div class="t" style="left:5px;top:815px;width:120px;text-align:center;letter-spacing:0.3px;font-size:10px">HDiv 13</div>
<div class="t" style="left:102px;top:802px;width:120px;text-align:center;letter-spacing:0.3px;font-size:10px">W2 Casement 13</div>
<div class="t" style="left:5px;top:898px;width:120px;text-align:center;letter-spacing:0.3px;font-size:10px">W2 Casement</div>
<div class="t" style="left:5px;top:911px;width:120px;text-align:center;letter-spacing:0.3px;font-size:10px">HDiv 13</div>
<!-- ============ RIGHT PANEL ============ -->
<div class="btn" style="left:296px;top:39px;width:78px;height:18px;line-height:16px;font-size:10.5px;letter-spacing:-0.1px;padding-right:2px">Favorites...</div>
<div class="t" style="left:717px;top:43px;font-size:10.5px;letter-spacing:0.2px">Default</div>
<div class="hl" style="left:287px;top:70px;width:467px"></div>
<!-- Preview and Positioning header -->
<div class="hdr" style="left:291px;top:76px;width:460px"></div>
<svg class="a" style="left:306px;top:80px" width="9" height="5"><path d="M0 0 H9 L4.5 5z" fill="#000"/></svg>
<svg class="a" style="left:329px;top:77px" width="18" height="20">
<path d="M1 5 L13 0.5 L17 2 L17 14 L5 19 L1 17z" fill="#5a5aa8" stroke="#1a1a5a" stroke-width="1"/>
<path d="M5 6 L17 2 L17 14 L5 19z" fill="#d8d8f0" stroke="#1a1a5a"/>
<path d="M7.5 9 L14 6.5 L14 12.5 L7.5 15z" fill="#fff" stroke="#1a1a5a"/><path d="M9 10.5 L12.5 9 L12.5 12 L9 13.5z" fill="#111"/>
</svg>
<div class="t b" style="left:357px;top:77px;font-size:11.5px;letter-spacing:0.14px">Preview and Positioning</div>
<!-- nav -->
<div class="btn" style="left:300px;top:107px;width:20px;height:18px;border-color:#8a8a8a"></div>
<svg class="a" style="left:304px;top:111px" width="13" height="10"><path d="M6 0 V10 L0.5 5z M12 0 V10 L6.5 5z" fill="#000"/></svg>
<div class="btn" style="left:322px;top:107px;width:20px;height:18px;border-color:#8a8a8a"></div>
<svg class="a" style="left:326px;top:111px" width="13" height="10"><path d="M0.5 0 V10 L6 5z M6.5 0 V10 L12 5z" fill="#000"/></svg>
<div class="a" style="left:347px;top:106px;width:223px;height:19px;border:1px solid;border-color:#a0a0a0 #fff #fff #a0a0a0;background:#f0f0f0"></div>
<div class="t" style="left:348px;top:110px;font-size:10.5px;letter-spacing:0px">W1 Casement 13</div>
<div class="btn" style="left:580px;top:107px;width:18px;height:18px;border-color:#8a8a8a"></div>
<svg class="a" style="left:587px;top:112px" width="5" height="9"><path d="M0 0 L4.5 4.5 L0 9z" fill="#000"/></svg>
<div class="btn" style="left:603px;top:107px;width:130px;height:18px;line-height:16px;letter-spacing:-0.15px;padding-right:2px">Empty Opening</div>
<!-- dimension icons -->
<svg class="a" style="left:296px;top:132px" width="42" height="132" fill="none" stroke="#000" stroke-width="1" shape-rendering="crispEdges">
<path d="M3.5 3.5 H24 L27 6.5 V26.5 H6.5 L3.5 23.5z" fill="#fff"/><rect x="4" y="5" width="2.5" height="19" fill="#c8c8c8" stroke="none"/><path d="M3.5 3 V23.5 L6.5 26.5 M3 3.5 H24 L27 6.5"/><rect x="6.5" y="6.5" width="20" height="20"/><rect x="11.5" y="9.5" width="10" height="10" fill="#fff"/><rect x="12" y="10" width="7" height="7" fill="#dedede" stroke="none"/><path d="M19.5 10 V18.5 H12"/>
<path d="M11.5 21 V26 M21.5 21 V26 M11.5 28 V29 M21.5 28 V29" stroke-dasharray="1 1"/>
<g shape-rendering="auto"><path d="M13 31.5 H20" stroke-width="1.3"/><path d="M11 31.5 l3.5 -2.5 v5z M22 31.5 l-3.5 -2.5 v5z" fill="#000" stroke="none"/></g>
<path d="M3.5 41.5 H24 L27 44.5 V64.5 H6.5 L3.5 61.5z" fill="#fff"/><rect x="4" y="43" width="2.5" height="19" fill="#c8c8c8" stroke="none"/><path d="M3.5 41 V61.5 L6.5 64.5 M3 41.5 H24 L27 44.5"/><rect x="6.5" y="44.5" width="20" height="20"/><rect x="11.5" y="47.5" width="10" height="10" fill="#fff"/><rect x="12" y="48" width="7" height="7" fill="#dedede" stroke="none"/><path d="M19.5 48 V56.5 H12"/>
<path d="M22 47.5 H31 M22 57.5 H31" stroke-dasharray="1 1"/>
<g shape-rendering="auto"><path d="M33.5 50 V56" stroke-width="1.3"/><path d="M33.5 47 l-2.5 3.5 h5z M33.5 58.5 l-2.5 -3.5 h5z" fill="#000" stroke="none"/></g>
<path d="M3.5 71.5 H24 L27 74.5 V99.5 H6.5 L3.5 96.5z" fill="#fff"/><rect x="4" y="73" width="2.5" height="24" fill="#c8c8c8" stroke="none"/><path d="M3.5 71 V96.5 L6.5 99.5 M3 71.5 H24 L27 74.5"/><rect x="6.5" y="74.5" width="20" height="25"/><rect x="11.5" y="77.5" width="10" height="10" fill="#fff"/><rect x="12" y="78" width="7" height="7" fill="#dedede" stroke="none"/><path d="M19.5 78 V86.5 H12"/>
<path d="M4 94.5 H27" stroke-dasharray="3 1 1 1"/>
<path d="M20 90.5 H24 M20.5 91 L22 93 L23.5 91" /><path d="M20 90 h4.5 l-2.25 3z" fill="#000" stroke="none"/>
<path d="M22 87.5 H31 M27 99.5 H31" stroke-dasharray="1 1"/>
<g shape-rendering="auto"><path d="M33.5 91 V97" stroke-width="1.3"/><path d="M33.5 88 l-2.5 3.5 h5z M33.5 99.5 l-2.5 -3.5 h5z" fill="#000" stroke="none"/></g>
<g transform="translate(2,112)"><rect x="1.5" y="5.5" width="5" height="9" fill="#fff"/><path d="M2 12 l4 -4 M2 14 l4 -4 M2 9 l3 -3" stroke="#555" shape-rendering="auto"/>
<rect x="20.5" y="5.5" width="5" height="9" fill="#fff"/><path d="M21 12 l4 -4 M21 14 l4 -4 M21 9 l3 -3" stroke="#555" shape-rendering="auto"/>
<path d="M6.5 9.5 H20.5 M6.5 12.5 H20.5"/><path d="M6 5.5 H33 M26 9.5 H33" stroke-dasharray="1 1"/>
<path d="M33.5 0 V5 M31.5 3 l2 2 l2 -2 M33.5 9 V14 M31.5 11 l2 -2 l2 2" shape-rendering="auto"/></g>
</svg>
<div class="edit" style="left:348px;top:137px;width:80px;height:23px"></div><div class="t" style="left:351px;top:143px;letter-spacing:0.5px">900</div>
<div class="btn" style="left:435px;top:142px;width:13px;height:12px;border-color:#7a7a7a;border-radius:2px"></div>
<svg class="a" style="left:440px;top:145px" width="4" height="7"><path d="M0 0 L3.5 3.5 L0 7z" fill="#000"/></svg>
<div class="edit" style="left:348px;top:172px;width:80px;height:23px"></div><div class="t" style="left:351px;top:178px;letter-spacing:0.4px">1500</div>
<div class="btn" style="left:435px;top:177px;width:13px;height:12px;border-color:#7a7a7a;border-radius:2px"></div>
<svg class="a" style="left:440px;top:180px" width="4" height="7"><path d="M0 0 L3.5 3.5 L0 7z" fill="#000"/></svg>
<div class="edit" style="left:348px;top:207px;width:100px;height:23px"></div><div class="t" style="left:351px;top:213px;letter-spacing:0.5px">900</div>
<div class="edit" style="left:348px;top:241px;width:100px;height:23px"></div><div class="t" style="left:351px;top:247px;letter-spacing:0.5px">0</div>
<div class="vl" style="left:457px;top:136px;height:189px"></div>
<!-- flip -->
<svg class="a" style="left:463px;top:164px" width="36" height="30" fill="none">
<rect x="1.5" y="11.5" width="5" height="8" fill="#fff" stroke="#aaa"/><path d="M2 17 l4 -4 M2 19 l4 -4 M3 13 l2 -2" stroke="#bbb"/>
<rect x="21.5" y="11.5" width="5" height="8" fill="#fff" stroke="#aaa"/><path d="M22 17 l4 -4 M22 19 l4 -4 M23 13 l2 -2" stroke="#bbb"/>
<path d="M6.5 13.5 H21.5 M6.5 16.5 H21.5" stroke="#aaa"/>
<path d="M7 11 Q8 2 20.5 0.5 V11" stroke="#b0b0b0" stroke-dasharray="1 1"/>
<path d="M7 17 Q9 27 20.5 28.5 V17" stroke="#aaa"/>
<path d="M33.5 8 V25" stroke="#aaa" stroke-dasharray="1 1"/><path d="M31 23 l2.5 3 l2.5 -3" stroke="#aaa"/>
</svg>
<div class="a" style="left:510px;top:173px;width:49px;height:18px;border:1px solid #adb2b5;border-radius:3px;background:#f4f4f4"></div>
<div class="t" style="left:525px;top:176px;color:#8d8d8d;font-size:11px">Flip</div>
<div class="t" style="left:465px;top:225px;letter-spacing:-0.1px">Anchor Point:</div>
<div class="a" style="left:465px;top:242px;width:24px;height:21px;border:1px solid #6c6c6c;border-radius:3px;background:linear-gradient(#cfcfcf,#e6e6e6)"></div>
<svg class="a" style="left:465px;top:246px" width="50" height="12">
<g fill="#000"><rect x="0" y="4" width="6" height="6"/><rect x="17" y="4" width="7" height="6"/><rect x="24" y="4" width="7" height="6"/><rect x="42" y="4" width="5" height="6"/></g>
<g stroke="#fff" stroke-width="1.1" fill="none"><path d="M0.5 8.5 l2 -2 l1.5 1.5 l2 -2 M17.5 8.5 l2 -2 l1.5 1.5 l2 -2 M24.5 8.5 l2 -2 l1.5 1.5 l2 -2 M42.5 8.5 l2 -2 l1 1 l1 -1"/></g>
<path d="M11.5 1.5 V3.5 M11.5 5.5 V7.5 M8.5 4.5 H10.5 M12.5 4.5 H14.5 M30.5 1.5 V3.5 M30.5 5.5 V7.5 M27.5 4.5 H29.5 M31.5 4.5 H33.5" stroke="#000"/>
</svg>
<div class="t" style="left:466px;top:283px;font-size:10.5px;letter-spacing:-0.1px;-webkit-text-stroke:0.2px #000">Anchor:</div>
<div class="t" style="left:466px;top:313px;font-size:10.5px;letter-spacing:0.12px;-webkit-text-stroke:0.2px #000">Opening Plane:</div>
<!-- preview tools -->
<div class="a" style="left:578px;top:137px;width:22px;height:20px;border:1px solid #6c6c6c;border-radius:3px;background:linear-gradient(#d2d2d2,#e8e8e8)"></div>
<svg class="a" style="left:576px;top:136px" width="26" height="130" fill="none" stroke="#000" shape-rendering="crispEdges">
<rect x="7" y="8" width="2" height="8" fill="#000" stroke="none"/><rect x="17" y="8" width="2" height="8" fill="#000" stroke="none"/>
<path d="M9 9.5 H17 M9 14.5 H17"/><path d="M9 12.5 H17" stroke-dasharray="1 1"/>
<rect x="9.5" y="29.5" width="7" height="9" fill="#fff"/><path d="M10 30 V38 M16 30 V38 M9.5 30 H16.5"/><path d="M13 30 V38.5 M10 32.5 H16"/>
<path d="M9.5 50.5 L12.5 52 V60.5 L9.5 59z M13.5 52.5 L16.5 54 V61 L13.5 59.5z M9.5 54.5 L12.5 56 M13.5 56.5 L16.5 58" stroke-width="1.3" fill="#fff" shape-rendering="auto"/>
<path d="M9 75 L13 72 L17 74 V80 L13 83 L9 81z" fill="#555" stroke="#000" shape-rendering="auto"/><path d="M9.5 75 L13 73 L16.5 74.5 L13 77z" fill="#fff" stroke="none" shape-rendering="auto"/><path d="M13 77 V82.5" stroke="#111" shape-rendering="auto"/>
<rect x="7" y="94" width="2" height="11" fill="#000" stroke="none"/><rect x="17" y="94" width="2" height="11" fill="#000" stroke="none"/>
<path d="M6 95.5 h4 M6 98.5 h4 M6 101.5 h4 M6 104.5 h4 M16 95.5 h4 M16 98.5 h4 M16 101.5 h4 M16 104.5 h4" stroke="#000"/>
<path d="M9 95.5 H17 M9 104.5 H17"/><path d="M10.5 98.5 l2 2 M12.5 98.5 l-2 2 M13.5 98.5 l2 2 M15.5 98.5 l-2 2" shape-rendering="auto" stroke-width="0.9"/>
<path d="M8 115.5 H19 M8 117.5 H19 M8 119.5 H15 M8 121.5 H14 M8 123.5 H19 M8 125.5 H19"/><path d="M16.5 119 V124 M15 119.5 H18 M15 123.5 H18" stroke-width="1"/>
</svg>
<div class="a" style="left:603px;top:137px;width:131px;height:130px;border:1px solid;border-color:#666 #e2e2e2 #e2e2e2 #666;background:#fff;box-shadow:inset 1px 1px 0 #a6a6a6,-1px -1px 0 #fafafa"></div>
<svg class="a" style="left:605px;top:139px" width="128" height="127">
<rect x="3.5" y="48.5" width="120" height="7" fill="none" stroke="#f26f1a"/><path d="M13.5 48.5 V55.5 M113.5 48.5 V55.5" stroke="#f26f1a"/>
<path d="M3.5 48 V56 M123.5 48 V56" stroke="#000"/>
<path d="M3 88.5 H124" stroke="#f26f1a"/>
</svg>
<div class="combo" style="left:578px;top:276px;width:156px;height:21px"></div>
<div class="t" style="left:583px;top:281px;letter-spacing:-0.12px">Sill to Wall base</div>
<svg class="a" style="left:721px;top:285px" width="9" height="5"><path d="M0 0 H9 L4.5 5z" fill="#000"/></svg>
<div class="combo" style="left:578px;top:306px;width:156px;height:22px"></div>
<div class="t" style="left:583px;top:311px;letter-spacing:0px">Associated to Wall</div>
<svg class="a" style="left:721px;top:315px" width="9" height="5"><path d="M0 0 H9 L4.5 5z" fill="#000"/></svg>

<div class="hl" style="left:287px;top:344px;width:467px"></div>
<div class="a" style="left:287px;top:345px;width:467px;height:18px;overflow:hidden"><div class="hdr" style="left:4px;top:5px;width:460px"></div></div>
<div class="hl" style="left:287px;top:363px;width:467px"></div>
<svg class="a" style="left:308px;top:352px" width="6" height="9"><path d="M0 0 L5.5 4.5 L0 9z" fill="#000"/></svg>
<svg class="a" style="left:329px;top:351px" width="20" height="13" fill="none" stroke="#000">
<path d="M1 1.5 H12 M1 1.5 l2 -1.5 M1 1.5 l2 1.5 M12 1.5 l-2 -1.5 M12 1.5 l-2 1.5"/>
<rect x="1.5" y="4.5" width="10" height="8" fill="#8d8df0"/><rect x="3" y="6" width="7" height="6" fill="#c8c8fa" stroke="none"/><path d="M6.5 5 V12 M2 8.5 H11" stroke="#7070d0"/>
<path d="M16.5 4 V12.5 M15 6 l1.5 -2 l1.5 2"/>
</svg>
<div class="t b" style="left:357px;top:351px;font-size:11.5px;letter-spacing:0.68px">Parameters</div>
<!-- casement header -->
<div class="hdr" style="left:291px;top:369px;width:460px"></div>
<svg class="a" style="left:306px;top:373px" width="9" height="5"><path d="M0 0 H9 L4.5 5z" fill="#000"/></svg>
<svg class="a" style="left:328px;top:370px" width="21" height="20" fill="none">
<rect x="0" y="0" width="4" height="4" fill="#000"/><rect x="1" y="1" width="2" height="2" fill="#7070e0"/>
<path d="M6 0.5 h1 M6 3.5 h1 M9 0.5 v3 M0 6.5 h1 M3 6.5 h1 M0.5 7 v1 M3.5 7 v1" stroke="#000"/>
<rect x="12.5" y="0.5" width="7" height="3" stroke="#777"/><rect x="12.5" y="5.5" width="7" height="3" stroke="#777"/>
<path d="M0.5 11 V18 M0.5 14.5 H3.5 M0.5 17.5 H3.5 M3.5 14.5 V18" stroke="#000"/><path d="M1 16.5 H3" stroke="#5050d0"/>
<path d="M3 11.5 H10 M5 17.5 H6" stroke="#000" stroke-dasharray="1 1"/><path d="M7.5 16 l1 1.5 l1 -1.5 M7.5 10.5 l1 1.5 l1 -1.5" stroke="#000"/>
<rect x="12.5" y="11.5" width="7" height="3" stroke="#777"/><rect x="12.5" y="15.5" width="7" height="3" stroke="#777"/>
</svg>
<div class="t b" style="left:357px;top:370px;font-size:11.5px;letter-spacing:0.22px">Casement Window Settings</div>
<!-- window size settings -->
<div class="btn" style="left:300px;top:400px;width:293px;height:23px;border-color:#7f7f7f"></div>
<svg class="a" style="left:308px;top:402px" width="20" height="19" fill="none" stroke="#000">
<path d="M1 1.5 H13 M1 1.5 l2 -1.5 M1 1.5 l2 1.5 M13 1.5 l-2 -1.5 M13 1.5 l-2 1.5"/>
<path d="M0.5 18 V4.5 H13.5 V18" stroke-width="1"/><path d="M2.5 18 V6.5 H11.5 V18" /><path d="M7 6.5 V18 M2.5 12 H11.5" />
<path d="M17.5 4 V18 M16 5 h3 M16 17.5 h3"/>
</svg>
<div class="t b" style="left:334px;top:406px;font-size:10.5px;letter-spacing:0.85px">Window Size Settings</div>
<svg class="a" style="left:586px;top:412px" width="4" height="7"><path d="M0 0 L3.5 3.5 L0 7z" fill="#000"/></svg>
<div class="a" style="left:605px;top:400px;width:31px;height:23px;border:1px solid #b5b8bc;border-radius:3px;background:#f4f4f4"></div>
<svg class="a" style="left:612px;top:409px" width="16" height="8"><path d="M6.5 0.5 L0.8 3.8 L6.5 7 M14.5 0.5 L8.8 3.8 L14.5 7" stroke="#8a8a8a" fill="none" stroke-width="1.1"/></svg>
<div class="btn" style="left:637px;top:400px;width:30px;height:23px;border-color:#7f7f7f"></div>
<svg class="a" style="left:644px;top:409px" width="16" height="8"><path d="M0.5 0.5 L6.2 3.8 L0.5 7 M8.5 0.5 L14.2 3.8 L8.5 7" stroke="#000" fill="none" stroke-width="1.1"/></svg>
<div class="hl" style="left:299px;top:427px;width:443px"></div>
<div class="vl" style="left:609px;top:436px;height:228px"></div>
<!-- nominal -->
<div class="a" style="left:306px;top:445px;width:8px;height:9px;border-left:1px solid #9a9a9a;border-top:1px solid #9a9a9a"></div>
<div class="t b" style="left:319px;top:440px;font-size:10.5px;letter-spacing:0.68px">Set As Nominal</div>
<div class="t b" style="left:474px;top:440px;font-size:10.5px;letter-spacing:1px">Width</div>
<div class="t b" style="left:541px;top:440px;font-size:10.5px;letter-spacing:0.8px">Height</div>
<svg class="a" style="left:299px;top:457px" width="14" height="50">
<defs><radialGradient id="rg" cx="0.5" cy="0.4" r="0.6"><stop offset="0" stop-color="#6ad0ff"/><stop offset="0.6" stop-color="#1f7ab8"/><stop offset="1" stop-color="#0a3e66"/></radialGradient>
<linearGradient id="rb" x1="0" y1="0" x2="1" y2="1"><stop offset="0" stop-color="#d4d4d4"/><stop offset="1" stop-color="#f8f8f8"/></linearGradient></defs>
<circle cx="6" cy="6" r="5.5" fill="url(#rb)" stroke="#8b8b8b"/><circle cx="6" cy="6" r="3.2" fill="url(#rg)"/>
<circle cx="6" cy="24" r="5.5" fill="#f2f2f2" stroke="#cfcfcf"/>
<circle cx="6" cy="42" r="5.5" fill="url(#rb)" stroke="#8b8b8b"/>
</svg>
<div class="t b" style="left:315px;top:457px;font-size:10.5px;letter-spacing:0.85px">1. Wallhole Dimensions</div>
<div class="t" style="left:315px;top:475px;font-size:10.5px;letter-spacing:0.3px;color:#8d8d8d">2. Reveal Dimensions</div>
<div class="t" style="left:315px;top:493px;font-size:10.5px;letter-spacing:0.2px;-webkit-text-stroke:0.25px #000">3. Unit Dimensions</div>
<div class="a" style="left:299px;top:509px;width:13px;height:13px;border:1px solid #8e8f8f;background:linear-gradient(135deg,#dcdcdc,#fff)"></div>
<div class="t" style="left:315px;top:510px;font-size:10.5px;letter-spacing:0.1px;-webkit-text-stroke:0.25px #000">Retain Nominal Size on Change</div>
<div class="edit" style="left:474px;top:455px;width:60px;height:18px"></div><div class="t b" style="left:478px;top:459px;font-size:10.5px;letter-spacing:1.4px">900</div>
<div class="edit" style="left:542px;top:455px;width:60px;height:18px"></div><div class="t b" style="left:546px;top:459px;font-size:10.5px;letter-spacing:1.3px">1500</div>
<div class="a" style="left:474px;top:474px;width:60px;height:16px;border:1px solid #b0b0b0;border-radius:2px;background:#f0f0f0"></div><div class="t" style="left:477px;top:477px;font-size:10.5px;color:#8d8d8d;letter-spacing:0.3px">900</div>
<div class="a" style="left:542px;top:474px;width:60px;height:16px;border:1px solid #b0b0b0;border-radius:2px;background:#f0f0f0"></div><div class="t" style="left:545px;top:477px;font-size:10.5px;color:#8d8d8d;letter-spacing:0.3px">1500</div>
<div class="edit" style="left:474px;top:492px;width:60px;height:16px"></div><div class="t" style="left:477px;top:495px;font-size:10.5px;letter-spacing:0.3px;-webkit-text-stroke:0.25px #000">900</div>
<div class="edit" style="left:542px;top:492px;width:60px;height:16px"></div><div class="t" style="left:545px;top:495px;font-size:10.5px;letter-spacing:0.3px;-webkit-text-stroke:0.25px #000">1500</div>
<div class="hl" style="left:299px;top:549px;width:305px"></div>

<!-- plan diagram -->
<svg class="a" style="left:0;top:0" width="767" height="700" shape-rendering="crispEdges">
<defs>
<g id="planhalf">
<rect x="299" y="598" width="35" height="48" fill="#d4d4d4"/><rect x="334" y="598" width="15" height="14" fill="#d4d4d4"/>
<rect x="299" y="596" width="59" height="2" fill="#000"/>
<rect x="299" y="646" width="37" height="2" fill="#000"/>
<rect x="322" y="589" width="32" height="7" fill="#000"/><rect x="324" y="591" width="28" height="5" fill="#fff"/>
<rect x="349" y="596" width="9" height="18" fill="#000"/><rect x="351" y="598" width="5" height="14" fill="#fff"/>
<rect x="334" y="612" width="31" height="19" fill="#000"/><rect x="336" y="614" width="3" height="15" fill="#fff"/><rect x="341" y="614" width="22" height="15" fill="#fff"/>
<rect x="334" y="629" width="13" height="19" fill="#000"/><rect x="336" y="631" width="9" height="15" fill="#fff"/>
<rect x="312" y="646" width="33" height="9" fill="#000"/><rect x="314" y="648" width="29" height="5" fill="#fff"/>
<rect x="356" y="622" width="20" height="16" fill="#000"/><rect x="358" y="624" width="16" height="12" fill="#fff"/>
<path d="M335.5 582 V612 M339.5 587 V612 M335.5 648 V662 M340 632 V644" stroke="#000" stroke-dasharray="1 1" fill="none" shape-rendering="auto"/>
<path d="M333.5 582 V587 M342.5 582 V587 M334 584.5 H342" stroke="#000" fill="none"/>

<path d="M351 602.5 l4 -3 v6z M340 641.5 l4 -3 v6z M336 660.5 l4 -3 v6z" fill="#000" shape-rendering="auto"/>
</g>
<g id="vhalf">
<rect x="633" y="459" width="46" height="50" fill="#d4d4d4"/>
<rect x="623" y="482" width="10" height="32" fill="#000"/><rect x="625" y="484" width="6" height="28" fill="#fff"/>
<rect x="679" y="472" width="10" height="33" fill="#000"/><rect x="681" y="474" width="6" height="29" fill="#fff"/>
<rect x="631" y="459" width="2" height="59" fill="#000"/><rect x="679" y="459" width="2" height="48" fill="#000"/>
<rect x="631" y="508" width="17" height="10" fill="#000"/><rect x="633" y="510" width="13" height="6" fill="#fff"/>
<rect x="646" y="494" width="35" height="13" fill="#000"/><rect x="666" y="496" width="13" height="9" fill="#fff"/>
<rect x="646" y="494" width="20" height="30" fill="#000"/><rect x="648" y="496" width="16" height="3" fill="#fff"/><rect x="648" y="501" width="16" height="21" fill="#fff"/>
<rect x="648" y="524" width="8" height="32" fill="#d4d4d4"/><rect x="658" y="535" width="5" height="21" fill="#d4d4d4"/><rect x="665" y="535" width="5" height="21" fill="#d4d4d4"/>
<rect x="646" y="524" width="2" height="32" fill="#000"/><rect x="656" y="524" width="2" height="32" fill="#000"/><rect x="663" y="535" width="2" height="21" fill="#000"/><rect x="670" y="535" width="2" height="21" fill="#000"/>
<rect x="656" y="516" width="16" height="19" fill="#000"/><rect x="658" y="518" width="12" height="15" fill="#fff"/>
<path d="M614.5 497 V555 M636.5 512 V555 M675.5 500 V555" stroke="#000" stroke-dasharray="1 1" fill="none"/>
<path d="M615 494.5 H622 M666 494.5 H697 M666 499.5 H697" stroke="#000" stroke-dasharray="1 1" fill="none"/>
<path d="M614.5 494 l-3 4 h6z M636.5 510 l-3 4 h6z M675.5 498 l-3 4 h6z" fill="#000" shape-rendering="auto"/>
<path d="M695 492.5 H701 M695 501.5 H701 M698 493 V501" stroke="#000" fill="none"/><path d="M696 493 h4 l-2 2z M696 501 h4 l-2 -2z" fill="#000"/>
</g>
</defs>
<use href="#planhalf"/>
<use href="#planhalf" transform="translate(890,0) scale(-1,1)"/>
<g>
<rect x="365" y="613" width="69" height="9" fill="#d4d4d4"/><rect x="376" y="623" width="58" height="6" fill="#d4d4d4"/><rect x="376" y="630" width="58" height="7" fill="#d4d4d4"/>
<rect x="365" y="612" width="69" height="1" fill="#000"/><rect x="376" y="622" width="58" height="1" fill="#000"/><rect x="376" y="629" width="58" height="1" fill="#000"/><rect x="376" y="636" width="58" height="1" fill="#000"/>
<rect x="450" y="613" width="75" height="9" fill="#d4d4d4"/><rect x="450" y="623" width="64" height="6" fill="#d4d4d4"/><rect x="450" y="630" width="64" height="7" fill="#d4d4d4"/>
<rect x="450" y="612" width="75" height="1" fill="#000"/><rect x="450" y="622" width="64" height="1" fill="#000"/><rect x="450" y="629" width="64" height="1" fill="#000"/><rect x="450" y="636" width="64" height="1" fill="#000"/>
</g>
<path d="M352 602.5 H434 M341 641.5 H434 M337 660.5 H434 M450 602.5 H538 M450 641.5 H549 M450 660.5 H553" stroke="#000" stroke-dasharray="1 1" fill="none"/>
<use href="#vhalf"/>
<use href="#vhalf" transform="translate(0,1122) scale(1,-1)"/>
</svg>
<div class="t" style="left:438px;top:596px;font-size:10.5px;letter-spacing:0.3px">2.</div>
<div class="t" style="left:439px;top:635px;font-size:10.5px;letter-spacing:0.3px">3.</div>
<div class="t" style="left:440px;top:654px;font-size:10.5px;letter-spacing:0.3px">1.</div>
<div class="a" style="left:608px;top:555px;width:80px;height:12px;background:#f0f0f0"></div>
<div class="t" style="left:611px;top:555px;font-size:10.5px;letter-spacing:0.3px">1.</div>
<div class="t" style="left:633px;top:555px;font-size:10.5px;letter-spacing:0.3px">2.</div>
<div class="t" style="left:672px;top:555px;font-size:10.5px;letter-spacing:0.3px">3.</div>
<div class="vl" style="left:609px;top:436px;height:228px"></div>
<div class="edit" style="left:299px;top:559px;width:52px;height:16px"></div><div class="t b" style="left:303px;top:560px;font-size:10.5px">0</div>
<div class="edit" style="left:534px;top:559px;width:52px;height:16px"></div><div class="t b" style="left:538px;top:560px;font-size:10.5px">0</div>
<div class="edit" style="left:700px;top:471px;width:42px;height:16px"></div><div class="t b" style="left:704px;top:472px;font-size:10.5px">0</div>
<div class="edit" style="left:700px;top:601px;width:42px;height:16px"></div><div class="t b" style="left:704px;top:602px;font-size:10.5px">0</div>

<div class="hl" style="left:287px;top:673px;width:467px"></div>
<div class="hl" style="left:287px;top:692px;width:467px"></div>
<div class="hl" style="left:287px;top:711px;width:467px"></div>
<div class="hl" style="left:287px;top:730px;width:467px"></div>
<div class="hl" style="left:287px;top:749px;width:467px"></div>
<div class="hl" style="left:287px;top:768px;width:467px"></div>
<div class="hl" style="left:287px;top:787px;width:467px"></div>
<div class="a" style="left:287px;top:674px;width:467px;height:18px;overflow:hidden"><div class="hdr" style="left:4px;top:5px;width:460px"></div></div>
<svg class="a" style="left:308px;top:681px" width="6" height="10"><path d="M0 0 L5.5 4.75 L0 9.5z" fill="#000"/></svg>
<svg class="a" style="left:329px;top:683px" width="20" height="10"><path d="M0 2 H7 V0.5 H14 V9 H1.5 V7 L0 6z" fill="#000"/><path d="M2 3 H6 V9 H4 V6 L2 5z" fill="#b8b8fa"/><path d="M8 2 H10 V4 H12 V6 H8z" fill="#b8b8fa"/><path d="M14 0.5 H19 M14 2.5 H19 M14 8.5 H19" stroke="#222"/><rect x="14" y="3" width="5" height="5" fill="#fff"/></svg>
<div class="t b" style="left:357px;top:680px;font-size:11.5px;letter-spacing:0.05px;color:#000">Floor Plan and Section</div>
<div class="a" style="left:287px;top:693px;width:467px;height:18px;overflow:hidden"><div class="hdr" style="left:4px;top:5px;width:460px"></div></div>
<svg class="a" style="left:308px;top:700px" width="6" height="10"><path d="M0 0 L5.5 4.75 L0 9.5z" fill="#000"/></svg>
<svg class="a" style="left:331px;top:698px" width="15" height="13" fill="none"><path d="M0.5 12.5 V0.5 H4 L5 1.5 H10 L11.5 3 V12.5" stroke="#000"/><path d="M1 1.5 H4 L5 2.5 H10.5" stroke="#6060e0"/><path d="M10.5 3.5 V12.5 M13 4 V12.5" stroke="#000" stroke-width="1.2"/><path d="M13 4 V12" stroke="#4040c0"/><path d="M5 3 V12.5 M1 9.5 H10" stroke="#777"/><path d="M1.5 10.5 H9.5" stroke="#a0a0f0"/></svg>
<div class="t b" style="left:357px;top:699px;font-size:11.5px;letter-spacing:0.9px;color:#000">Model</div>
<div class="a" style="left:287px;top:712px;width:467px;height:18px;overflow:hidden"><div class="hdr" style="left:4px;top:5px;width:460px"></div></div>
<svg class="a" style="left:308px;top:719px" width="6" height="10"><path d="M0 0 L5.5 4.75 L0 9.5z" fill="#000"/></svg>
<svg class="a" style="left:328px;top:717px" width="20" height="13"><rect x="6" y="0" width="2" height="12" fill="#000"/><rect x="17" y="0" width="2" height="11" fill="#000"/><rect x="10" y="9" width="9" height="2" fill="#000"/><rect x="8" y="0" width="9" height="9" fill="#fff"/><path d="M8 3 l3 -3 M8 7 l7 -7 M10 9 l7 -7 M14 9 l3 -3 M8 11 l1 -1" stroke="#5555dd" stroke-width="1"/><rect x="8" y="7" width="2" height="5" fill="#c8c8f0"/><path d="M2.5 6 V12 M1 8 l1.5 -2 l1.5 2" stroke="#000" fill="none"/><rect x="4" y="8" width="2" height="4" fill="#000"/><path d="M11 10.5 h1 M14 10.5 h1" stroke="#555"/></svg>
<div class="t b" style="left:357px;top:718px;font-size:11.5px;letter-spacing:0.95px;color:#000">Reveal</div>
<div class="a" style="left:287px;top:731px;width:467px;height:18px;overflow:hidden"><div class="hdr" style="left:4px;top:5px;width:460px"></div></div>
<svg class="a" style="left:308px;top:738px" width="6" height="10"><path d="M0 0 L5.5 4.75 L0 9.5z" fill="#000"/></svg>
<svg class="a" style="left:328px;top:738px" width="20" height="12" fill="none"><circle cx="9.5" cy="2.5" r="2" stroke="#5555dd"/><path d="M9.5 4.5 V11" stroke="#5555dd" stroke-width="1.2"/><rect x="0.5" y="6.5" width="3" height="4" stroke="#000" fill="#fff"/><path d="M1 10 l2 -3" stroke="#000"/><rect x="15.5" y="6.5" width="3" height="4" stroke="#000"/><path d="M16 10 l2 -3" stroke="#000"/><path d="M5 7.5 h3 M11 7.5 h3 M5 9.5 h3 M11 9.5 h3" stroke="#777" stroke-dasharray="1 1"/></svg>
<div class="t b" style="left:357px;top:737px;font-size:11.5px;letter-spacing:0.35px;color:#000">Dimension Marker</div>
<div class="a" style="left:287px;top:750px;width:467px;height:18px;overflow:hidden"><div class="hdr" style="left:4px;top:5px;width:460px"></div></div>
<svg class="a" style="left:308px;top:757px" width="6" height="10"><path d="M0 0 L5.5 4.75 L0 9.5z" fill="#9a9a9a"/></svg>
<svg class="a" style="left:328px;top:755px" width="20" height="12" fill="none"><rect x="0" y="0" width="4" height="4" fill="#9a9a9a"/><path d="M6 0.5 h1 M6 3.5 h1 M8 1 v2 M0 6.5 h1 M3 6.5 h1 M0.5 7 v1 M3.5 7 v1" stroke="#9a9a9a"/><rect x="12.5" y="0.5" width="7" height="3" stroke="#9a9a9a"/><rect x="12.5" y="5.5" width="7" height="3" stroke="#9a9a9a"/><path d="M9 11.5 h1 M11 11.5 h1" stroke="#aaa"/></svg>
<div class="t b" style="left:357px;top:756px;font-size:11.5px;letter-spacing:0.2px;color:#a0a0a0">Marker Custom Settings</div>
<div class="a" style="left:287px;top:769px;width:467px;height:18px;overflow:hidden"><div class="hdr" style="left:4px;top:5px;width:460px"></div></div>
<svg class="a" style="left:308px;top:776px" width="6" height="10"><path d="M0 0 L5.5 4.75 L0 9.5z" fill="#000"/></svg>
<svg class="a" style="left:329px;top:775px" width="19" height="13" fill="none"><rect x="0.5" y="0.5" width="11" height="12" fill="#fff" stroke="#bbb"/><rect x="2" y="2" width="8" height="3" fill="#a8a8f8"/><path d="M1 5.5 H10" stroke="#555"/><path d="M2 8 h2 M5 8 h2 M8 8 h2" stroke="#000" stroke-width="1.5"/><path d="M12 5.5 H15 L17.5 8.5 V12.5 H12" stroke="#000" fill="#fff"/><path d="M12.5 9.5 h2 M12.5 11.5 h4" stroke="#5555dd"/></svg>
<div class="t b" style="left:357px;top:775px;font-size:11.5px;letter-spacing:0.05px;color:#000">Listing and Labeling</div>
<!-- bottom buttons -->
<div class="btn" style="left:588px;top:937px;width:68px;height:22px;line-height:21px">Cancel</div>
<div class="btn" style="left:674px;top:937px;width:68px;height:22px;line-height:21px;border-color:#3c7fb1;box-shadow:inset 0 0 0 1px #48d0f5">OK</div>
<svg class="a" style="left:748px;top:957px" width="9" height="10" shape-rendering="crispEdges">
<g fill="#fff"><rect x="7" y="2" width="2" height="2"/><rect x="4" y="5" width="2" height="2"/><rect x="7" y="5" width="2" height="2"/><rect x="1" y="8" width="2" height="2"/><rect x="4" y="8" width="2" height="2"/><rect x="7" y="8" width="2" height="2"/></g>
<g fill="#a6a6a6"><rect x="6" y="1" width="2" height="2"/><rect x="3" y="4" width="2" height="2"/><rect x="6" y="4" width="2" height="2"/><rect x="0" y="7" width="2" height="2"/><rect x="3" y="7" width="2" height="2"/><rect x="6" y="7" width="2" height="2"/></g>
</svg>
</body></html>
